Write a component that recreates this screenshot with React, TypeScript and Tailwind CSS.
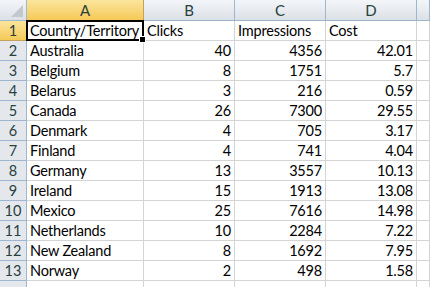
const rows: [string, number, number, string][] = [
  ["Australia", 40, 4356, "42.01"],
  ["Belgium", 8, 1751, "5.7"],
  ["Belarus", 3, 216, "0.59"],
  ["Canada", 26, 7300, "29.55"],
  ["Denmark", 4, 705, "3.17"],
  ["Finland", 4, 741, "4.04"],
  ["Germany", 13, 3557, "10.13"],
  ["Ireland", 15, 1913, "13.08"],
  ["Mexico", 25, 7616, "14.98"],
  ["Netherlands", 10, 2284, "7.22"],
  ["New Zealand", 8, 1692, "7.95"],
  ["Norway", 2, 498, "1.58"],
];

const colHead =
  "h-[21px] border-r border-b border-[#9eb6ce] bg-gradient-to-b from-[#f3f5f8] to-[#dce1e7] flex items-center justify-center text-[15px] text-[#27413e]";
const colHeadSel =
  "h-[21px] border-r border-b border-[#c2a25d] bg-gradient-to-b from-[#fbe59c] to-[#f5c955] flex items-center justify-center text-[15px] text-[#27413e]";
const rowHead =
  "h-[20px] border-r border-b border-[#9eb6ce] bg-[#e4e8ed] flex items-center justify-center text-[14.5px] text-[#27413e]";
const rowHeadSel =
  "h-[20px] border-r border-b border-[#c2a25d] bg-gradient-to-b from-[#fbe59c] to-[#f5c955] flex items-center justify-center text-[14.5px] text-[#27413e]";
const cell =
  "h-[20px] border-r border-b border-[#d4d4d4] bg-white flex items-center px-[3px] text-[14.5px] tracking-[-0.2px] text-black whitespace-nowrap overflow-visible";

export default function App() {
  return (
    <div
      className="w-[430px] h-[287px] overflow-hidden bg-white"
      style={{ fontFamily: "Lato, 'Open Sans', sans-serif" }}
    >
      <div className="grid grid-cols-[27px_117px_91px_91px_91px_1fr]">
        <div className="relative h-[21px] border-r border-b border-[#9eb6ce] bg-gradient-to-b from-[#f3f5f8] to-[#dce1e7]">
          <div className="absolute right-[3px] bottom-[3px] w-0 h-0 border-l-[12px] border-l-transparent border-b-[12px] border-b-[#c3c8ce]" />
        </div>
        <div className={colHeadSel}>A</div>
        <div className={colHead}>B</div>
        <div className={colHead}>C</div>
        <div className={colHead}>D</div>
        <div className={colHead}></div>

        <div className={rowHeadSel}>1</div>
        <div className={cell + " relative"}>
          Country/Territory
          <div className="absolute -left-px -top-px w-[calc(100%+2px)] h-[calc(100%+2px)] border-2 border-black" />
          <div className="absolute -right-[3px] -bottom-[3px] w-[5px] h-[5px] bg-black border border-white box-content" />
        </div>
        <div className={cell}>Clicks</div>
        <div className={cell}>Impressions</div>
        <div className={cell}>Cost</div>
        <div className={cell}></div>

        {rows.map((r, i) => (
          <div key={r[0]} className="contents">
            <div className={rowHead}>{i + 2}</div>
            <div className={cell}>{r[0]}</div>
            <div className={cell + " justify-end"}>{r[1]}</div>
            <div className={cell + " justify-end"}>{r[2]}</div>
            <div className={cell + " justify-end"}>{r[3]}</div>
            <div className={cell}></div>
          </div>
        ))}

        <div className={rowHead}></div>
        <div className={cell}></div>
        <div className={cell}></div>
        <div className={cell}></div>
        <div className={cell}></div>
        <div className={cell}></div>
      </div>
    </div>
  );
}
